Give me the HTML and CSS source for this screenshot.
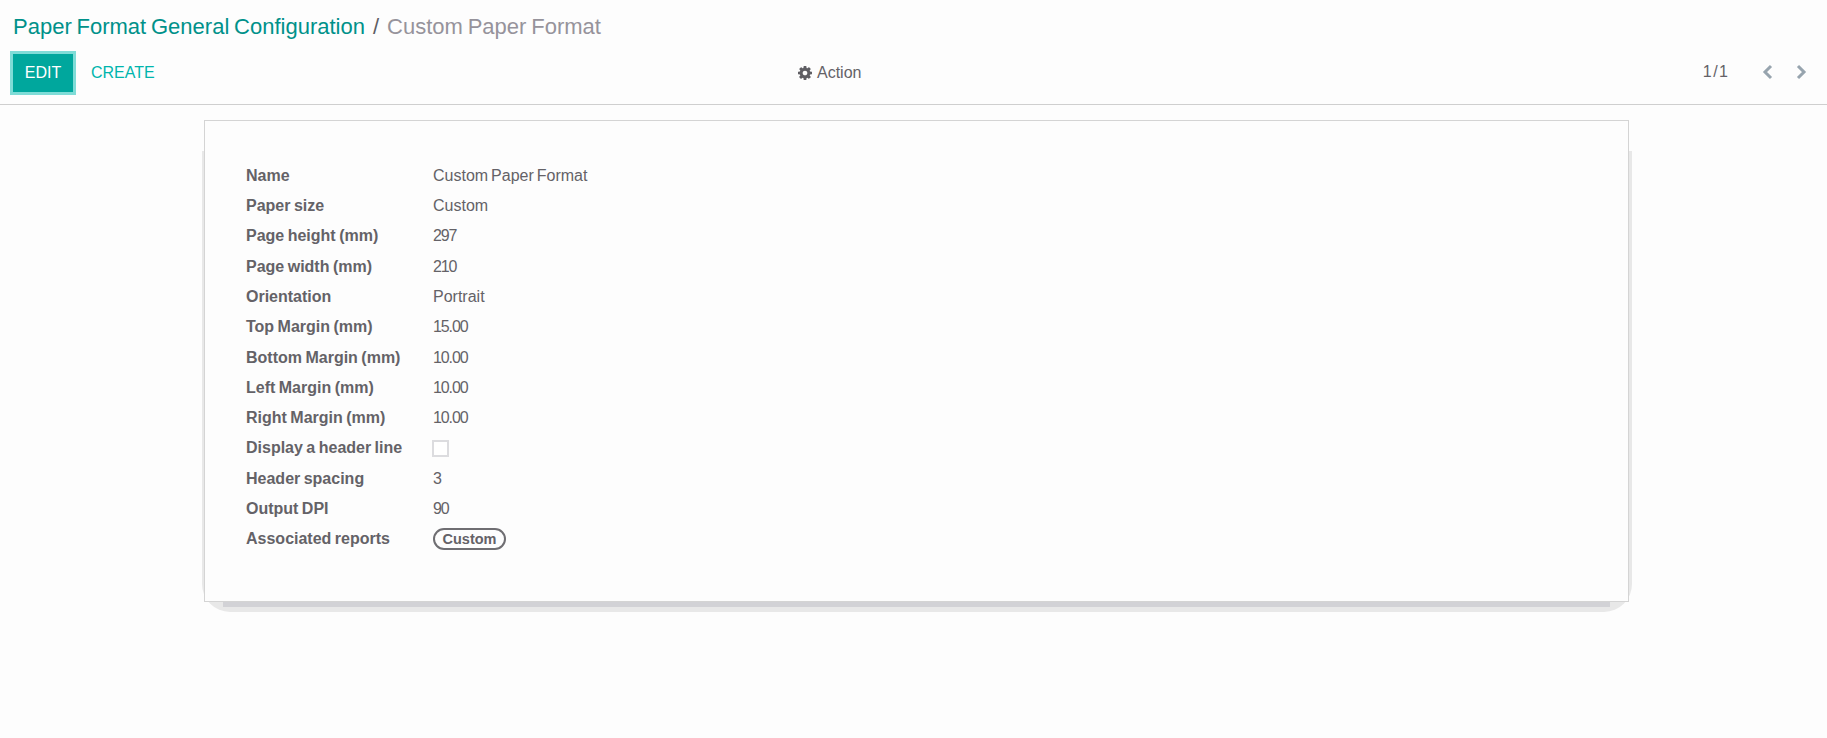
FILE: index.html
```html
<!DOCTYPE html>
<html lang="en">
<head>
<meta charset="utf-8">
<title>Custom Paper Format</title>
<link rel="stylesheet" href="styles.css">
</head>
<body>
<header class="control-panel">
  <h1 class="breadcrumb"><a class="crumb-link">Paper Format General Configuration</a><span class="crumb-sep">/</span><span class="crumb-current">Custom Paper Format</span></h1>
  <div class="toolbar">
    <div class="toolbar-left">
      <button class="btn-edit">EDIT</button>
      <button class="btn-create">CREATE</button>
    </div>
    <div class="toolbar-action">
      <svg class="gear" viewBox="0 0 1536 1536" width="14" height="14"><path fill="#5f5e63" d="M1024 768q0-106-75-181t-181-75-181 75-75 181 75 181 181 75 181-75 75-181zm512-109v222q0 12-8 23t-20 13l-185 28q-19 54-39 91 35 50 107 138 10 12 10 25t-9 23q-27 37-99 108t-94 71q-12 0-26-9l-138-108q-44 23-91 38-16 136-29 186-7 28-36 28H657q-14 0-24.500-8.500T621 1506l-28-184q-49-16-90-37l-141 107q-10 9-25 9-14 0-25-11-126-114-165-168-7-10-7-23 0-12 8-23 15-21 51-66.500t54-70.500q-27-50-41-99L29 913q-13-2-21-12.500T0 877V655q0-12 8-23t19-13l186-28q14-46 39-92-40-57-107-138-10-12-10-24 0-10 9-23 26-36 98.500-107.500T337 135q13 0 26 10l138 107q44-23 91-38 16-136 29-186 7-28 36-28h222q14 0 24.500 8.500T915 30l28 184q49 16 90 37l142-107q9-9 24-9 13 0 25 10 129 119 165 170 7 8 7 22 0 12-8 23-15 21-51 66.500t-54 70.500q26 50 41 98l183 28q13 2 21 12.500t8 23.500z"/></svg>
      <span>Action</span>
    </div>
    <div class="pager">
      <span class="pager-count">1 / 1</span>
      <svg class="pager-arrow" viewBox="0 0 12 16" width="12" height="16"><path d="M10 2 4 8l6 6" /></svg>
      <svg class="pager-arrow" viewBox="0 0 12 16" width="12" height="16"><path d="M2 2l6 6-6 6" /></svg>
    </div>
  </div>
</header>
<main class="content">
  <section class="sheet">
    <dl class="fields">
      <dt>Name</dt><dd>Custom Paper Format</dd>
      <dt>Paper size</dt><dd>Custom</dd>
      <dt>Page height (mm)</dt><dd class="num">297</dd>
      <dt>Page width (mm)</dt><dd class="num">210</dd>
      <dt>Orientation</dt><dd>Portrait</dd>
      <dt>Top Margin (mm)</dt><dd class="num">15.00</dd>
      <dt>Bottom Margin (mm)</dt><dd class="num">10.00</dd>
      <dt>Left Margin (mm)</dt><dd class="num">10.00</dd>
      <dt>Right Margin (mm)</dt><dd class="num">10.00</dd>
      <dt>Display a header line</dt><dd><span class="checkbox"></span></dd>
      <dt>Header spacing</dt><dd class="num">3</dd>
      <dt>Output DPI</dt><dd class="num">90</dd>
      <dt>Associated reports</dt><dd><span class="tag">Custom</span></dd>
    </dl>
  </section>
</main>
</body>
</html>
```
FILE: styles.css
```css
* { box-sizing: border-box; }
html, body { margin: 0; height: 100%; }
body {
  background: #fdfdfd;
  color: #646267;
  font-family: "Liberation Sans", Arial, sans-serif;
  font-size: 16px;
  word-spacing: -1.5px;
  overflow: hidden;
}
.control-panel {
  height: 105px;
  border-bottom: 1px solid #cfcfcf;
  padding: 0 0 0 10px;
}
.breadcrumb {
  margin: 0;
  padding: 14px 0 0 3px;
  height: 51px;
  font-size: 22px;
  font-weight: 400;
  line-height: 26px;
  word-spacing: -1.3px;
}
.crumb-link { color: #00918a; }
.crumb-sep { margin: 0 8px; color: #5f5e63; }
.crumb-current { color: #96939b; }
.toolbar {
  display: grid;
  grid-template-columns: 788px auto 1fr;
  align-items: center;
  height: 44px;
}
.toolbar-left { display: flex; align-items: center; gap: 15px; }
.btn-edit {
  width: 66px;
  height: 44px;
  background: #00a79d;
  border: 3px solid #7fdcd7;
  color: #fff;
  font: inherit;
  padding: 0;
}
.btn-create {
  background: none;
  border: 0;
  color: #00b5ad;
  font: inherit;
  padding: 0;
}
.toolbar-action { display: flex; align-items: center; gap: 5px; padding-bottom: 1px; }
.gear { display: block; }
.pager { display: flex; align-items: center; justify-content: flex-end; padding: 0 19px 2px 0; }
.pager-count { margin-right: 33px; word-spacing: -3px; }
.pager-arrow { margin-left: 23px; fill: none; stroke: #97a4ae; stroke-width: 3; }
.pager-count + .pager-arrow { margin-left: 0; }
.content { padding: 15px 198px 0 204px; }
.sheet {
  position: relative;
  height: 482px;
  background: #fdfdfd;
  border: 1px solid #d4d4d4;
  padding: 39.6px 41px 0;
}
.sheet::before {
  content: "";
  position: absolute;
  z-index: -1;
  top: 30px;
  left: -3px;
  right: -4px;
  bottom: -11px;
  background: #e8e8e8;
  border-radius: 0 0 28px 28px;
}
.sheet::after {
  content: "";
  position: absolute;
  z-index: -1;
  left: 18px;
  right: 18px;
  bottom: -6px;
  height: 6px;
  background: #d2d2d6;
}
.fields {
  display: grid;
  grid-template-columns: 187px 1fr;
  grid-auto-rows: 30.3px;
  margin: 0;
  align-items: center;
}
.fields dt { font-weight: 700; word-spacing: -1px; }
.fields dd { margin: 0; }
.fields .num { letter-spacing: -1.1px; }
.checkbox {
  display: block;
  width: 17px;
  height: 17px;
  margin-left: -1px;
  border: 2px solid #dcdcdf;
  background: #fff;
}
.tag {
  display: inline-block;
  border: 2px solid #6f6e72;
  border-radius: 11px;
  padding: 0 7.5px;
  font-weight: 700;
  font-size: 14.5px;
  line-height: 18px;
}
```
